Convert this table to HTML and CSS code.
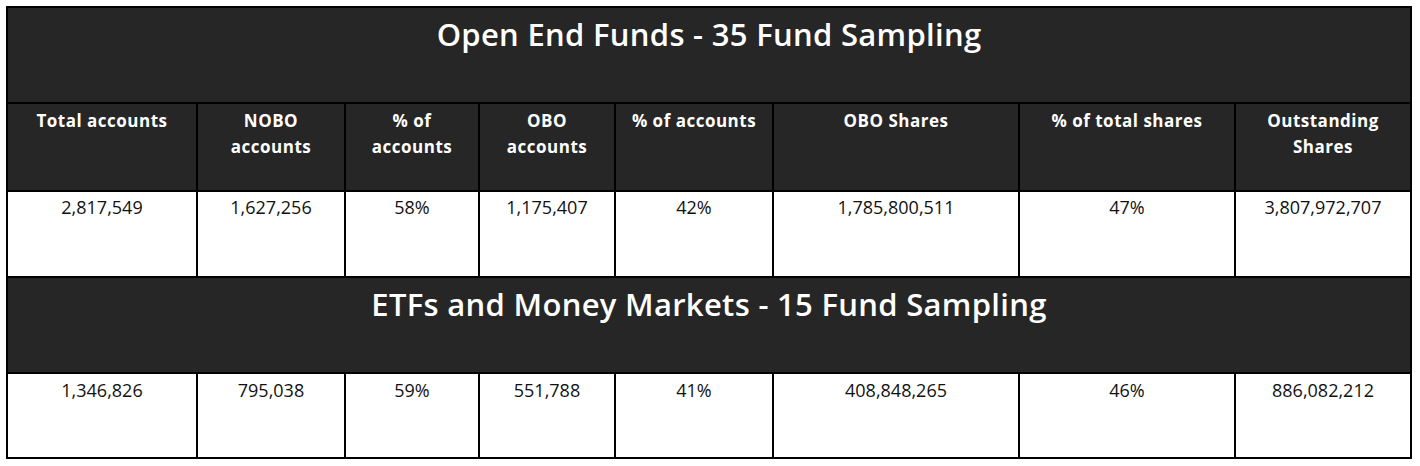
FILE: index.html
```html
<!DOCTYPE html>
<html lang="en">
<head>
<meta charset="utf-8">
<title>Fund Sampling</title>
<link rel="stylesheet" href="styles.css">
</head>
<body>
<table class="funds">
  <colgroup>
    <col class="c1"><col class="c2"><col class="c3"><col class="c4">
    <col class="c5"><col class="c6"><col class="c7"><col class="c8">
  </colgroup>
  <tbody>
    <tr class="title-row">
      <td class="title" colspan="8">Open End Funds - 35 Fund Sampling</td>
    </tr>
    <tr class="head-row">
      <td class="head">Total accounts</td>
      <td class="head">NOBO accounts</td>
      <td class="head">% of accounts</td>
      <td class="head">OBO accounts</td>
      <td class="head">% of accounts</td>
      <td class="head">OBO Shares</td>
      <td class="head">% of total shares</td>
      <td class="head">Outstanding Shares</td>
    </tr>
    <tr class="data-row">
      <td class="num">2,817,549</td>
      <td class="num">1,627,256</td>
      <td class="num">58%</td>
      <td class="num">1,175,407</td>
      <td class="num">42%</td>
      <td class="num">1,785,800,511</td>
      <td class="num">47%</td>
      <td class="num">3,807,972,707</td>
    </tr>
    <tr class="title-row">
      <td class="title" colspan="8">ETFs and Money Markets - 15 Fund Sampling</td>
    </tr>
    <tr class="data-row last">
      <td class="num">1,346,826</td>
      <td class="num">795,038</td>
      <td class="num">59%</td>
      <td class="num">551,788</td>
      <td class="num">41%</td>
      <td class="num">408,848,265</td>
      <td class="num">46%</td>
      <td class="num">886,082,212</td>
    </tr>
  </tbody>
</table>
</body>
</html>
```
FILE: styles.css
```css
html, body {
  margin: 0;
  padding: 0;
  background: #ffffff;
}

body {
  padding: 6px;
  font-family: "Open Sans", "Liberation Sans", sans-serif;
  color: #111111;
}

.funds {
  border-collapse: separate;
  border-spacing: 0;
  table-layout: fixed;
  width: 1406px;
  border-top: 2px solid #000;
  border-left: 2px solid #000;
}

.funds td {
  box-sizing: border-box;
  border-right: 2px solid #000;
  border-bottom: 2px solid #000;
  text-align: center;
  vertical-align: top;
  padding: 0 10px;
}

.c1 { width: 190px; }
.c2 { width: 148px; }
.c3 { width: 134px; }
.c4 { width: 136px; }
.c5 { width: 158px; }
.c6 { width: 246px; }
.c7 { width: 216px; }
.c8 { width: 176px; }

.title-row td { height: 96px; }
.head-row td { height: 88px; }
.data-row td { height: 86px; }
.data-row.last td { height: 85px; }

.funds td.title {
  background: #262626;
  color: #ffffff;
  font-size: 31px;
  font-weight: 600;
  letter-spacing: 0.3px;
  line-height: 40px;
  padding-top: 6px;
}

.funds td.head {
  background: #262626;
  color: #ffffff;
  font-size: 17px;
  font-weight: 700;
  letter-spacing: 0.5px;
  line-height: 26px;
  padding-top: 4px;
}

.funds td.num {
  background: #ffffff;
  color: #111111;
  font-size: 18px;
  font-weight: 400;
  line-height: 26px;
  padding-top: 2px;
}

.data-row.last td.num {
  padding-top: 3px;
}
```
